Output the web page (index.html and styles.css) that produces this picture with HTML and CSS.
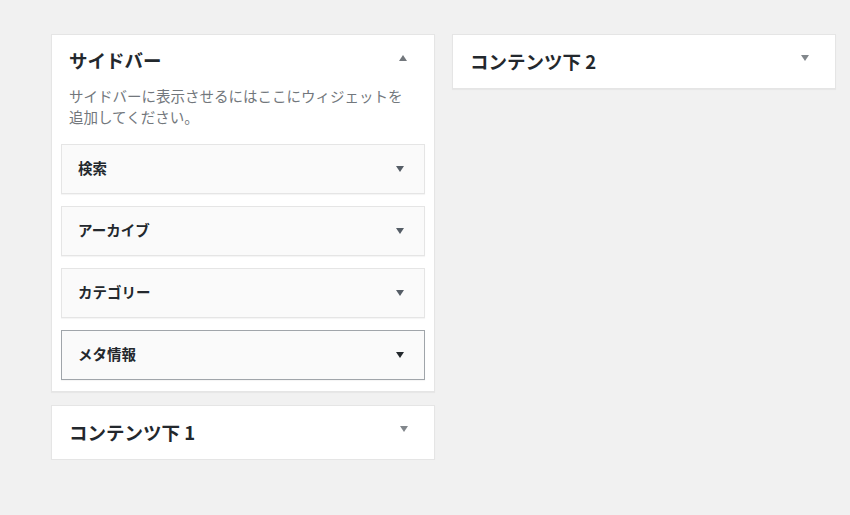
FILE: index.html
```html
<!DOCTYPE html>
<html lang="ja">
<head>
<meta charset="utf-8">
<title>ウィジェット</title>
<link rel="stylesheet" href="styles.css">
</head>
<body>
<div class="wrap">
  <div class="col">
    <div class="panel sidebar">
      <div class="panel-head">
        <h2 class="panel-title">サイドバー</h2>
        <span class="arrow up"></span>
      </div>
      <p class="desc">サイドバーに表示させるにはここにウィジェットを<br>追加してください。</p>
      <div class="widgets">
        <div class="widget"><span class="widget-title">検索</span><span class="arrow down"></span></div>
        <div class="widget"><span class="widget-title">アーカイブ</span><span class="arrow down"></span></div>
        <div class="widget"><span class="widget-title">カテゴリー</span><span class="arrow down"></span></div>
        <div class="widget active"><span class="widget-title">メタ情報</span><span class="arrow down"></span></div>
      </div>
    </div>
    <div class="panel closed">
      <div class="panel-head">
        <h2 class="panel-title">コンテンツ下 1</h2>
        <span class="arrow down light"></span>
      </div>
    </div>
  </div>
  <div class="col">
    <div class="panel closed">
      <div class="panel-head">
        <h2 class="panel-title">コンテンツ下 2</h2>
        <span class="arrow down light"></span>
      </div>
    </div>
  </div>
</div>
</body>
</html>
```

FILE: styles.css
```css
html, body {
  margin: 0;
  padding: 0;
  background: #f1f1f1;
}

body {
  font-family: "Noto Sans CJK JP", "Noto Sans", sans-serif;
  color: #23282d;
}

.wrap {
  display: flex;
  align-items: flex-start;
  gap: 17px;
  padding: 34px 0 0 51px;
}

.col {
  width: 384px;
  display: flex;
  flex-direction: column;
  gap: 13px;
}

.panel {
  background: #fff;
  border: 1px solid #e5e5e5;
  box-shadow: 0 1px 1px rgba(0, 0, 0, 0.04);
}

.sidebar {
  padding: 0 9px 11px 9px;
}

.panel-head {
  display: flex;
  align-items: center;
  justify-content: space-between;
  height: 50px;
  padding: 0 18px 0 8px;
}

.closed .panel-head {
  height: 53px;
  padding: 0 26px 0 17px;
}

.panel-title {
  margin: 0;
  font-size: 18.5px;
  font-weight: 700;
  line-height: 1;
  color: #23282d;
}

.desc {
  margin: 0 0 17px 8px;
  font-size: 14.5px;
  line-height: 21px;
  color: #72777c;
  letter-spacing: 0;
}

.widgets {
  display: flex;
  flex-direction: column;
  gap: 12px;
}

.widget {
  height: 48px;
  display: flex;
  align-items: center;
  justify-content: space-between;
  padding: 0 20px 0 16px;
  background: #fafafa;
  border: 1px solid #e5e5e5;
  box-shadow: 0 1px 1px rgba(0, 0, 0, 0.04);
}

.widget.active {
  border-color: #a0a5aa;
}

.widget-title {
  font-size: 14.5px;
  font-weight: 700;
  color: #23282d;
  margin-top: -3px;
}

.arrow {
  width: 0;
  height: 0;
  border-left: 4px solid transparent;
  border-right: 4px solid transparent;
}

.arrow.down {
  border-top: 6px solid #555d66;
}

.arrow.up {
  border-bottom: 6px solid #72777c;
  margin-top: -4px;
}

.arrow.down.light {
  border-top-color: #82878c;
  margin-top: -8px;
}

.widget.active .arrow.down {
  border-top-color: #23282d;
}
```
